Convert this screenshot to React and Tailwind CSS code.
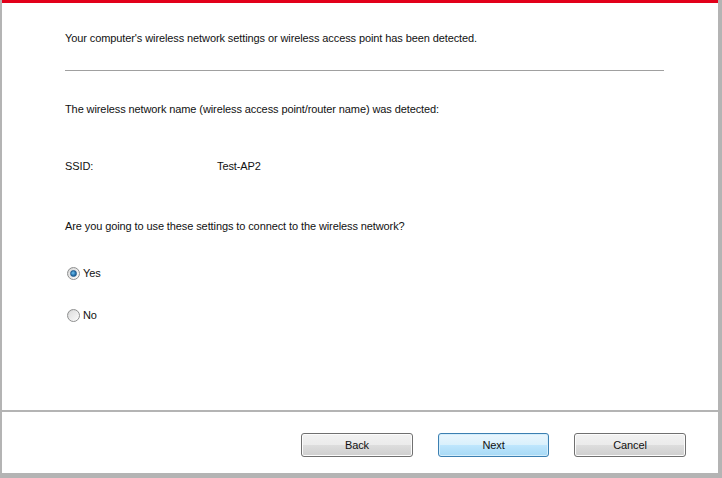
import React, { useState } from 'react';

const font = { fontFamily: '"Liberation Sans", Arial, sans-serif' };

const Radio = ({ checked, label, onClick }) => (
  <button onClick={onClick} className="flex items-center h-[14px] gap-[3px] text-[11px] leading-[14px] text-[#111] tracking-[-0.1px]">
    <span className="relative w-[13px] h-[13px] rounded-full border border-[#8e8f8f] bg-gradient-to-br from-[#cfcfcf] via-[#ececec] to-white flex items-center justify-center">
      <span className="w-[9px] h-[9px] rounded-full bg-gradient-to-br from-[#dedede] to-[#f7f7f7] flex items-center justify-center">
        {checked && (
          <span className="w-[7px] h-[7px] rounded-full bg-[radial-gradient(circle_at_40%_40%,#6fc1ef_0%,#2a78b3_55%,#134c7c_100%)] border border-[#1f5a8e]" />
        )}
      </span>
    </span>
    <span>{label}</span>
  </button>
);

const WinButton = ({ children, primary, className = '' }) => (
  <button
    className={`h-[24px] rounded-[3px] border text-[11px] text-[#111] tracking-[-0.1px] ${className} ${
      primary
        ? 'border-[#3c7fb1] bg-[linear-gradient(to_bottom,#eaf6fd_0%,#d9f0fc_50%,#bee6fd_51%,#a7d9f5_100%)] shadow-[inset_0_0_0_1px_#d4eefc]'
        : 'border-[#707070] bg-[linear-gradient(to_bottom,#f2f2f2_0%,#ebebeb_50%,#dddddd_51%,#cfcfcf_100%)] shadow-[inset_0_0_0_1px_#fcfcfc]'
    }`}
  >
    {children}
  </button>
);

export default function App() {
  const [useSettings, setUseSettings] = useState(true);

  return (
    <div style={font} className="w-[722px] h-[478px] bg-white flex flex-col border-l-2 border-r-4 border-b-[5px] border-[#b4b4b4]">
      <div className="h-[3px] bg-[#e2001a] shrink-0" />

      <div className="flex-1 flex flex-col pt-[28px] text-[11px] leading-[14px] text-[#111] tracking-[-0.1px]">
        <p className="ml-[63px] h-[14px]">
          Your computer's wireless network settings or wireless access point has been detected.
        </p>
        <div className="ml-[63px] mt-[25px] w-[599px] h-px bg-[#a0a0a0]" />

        <p className="ml-[63px] mt-[31px] h-[14px]">
          The wireless network name (wireless access point/router name) was detected:
        </p>

        <div className="ml-[63px] mt-[43px] h-[14px] flex">
          <span className="w-[152px]">SSID:</span>
          <span>Test-AP2</span>
        </div>

        <p className="ml-[63px] mt-[46px] h-[14px]">
          Are you going to use these settings to connect to the wireless network?
        </p>

        <div className="ml-[65px] mt-[33px] flex flex-col gap-[28px]">
          <Radio checked={useSettings} label="Yes" onClick={() => setUseSettings(true)} />
          <Radio checked={!useSettings} label="No" onClick={() => setUseSettings(false)} />
        </div>
      </div>

      <div className="h-[63px] shrink-0 border-t-2 border-[#b4b4b4] pt-[21px] pr-[32px] flex justify-end gap-[25px]">
        <WinButton className="w-[112px]">Back</WinButton>
        <WinButton className="w-[111px]" primary>Next</WinButton>
        <WinButton className="w-[112px]">Cancel</WinButton>
      </div>
    </div>
  );
}
